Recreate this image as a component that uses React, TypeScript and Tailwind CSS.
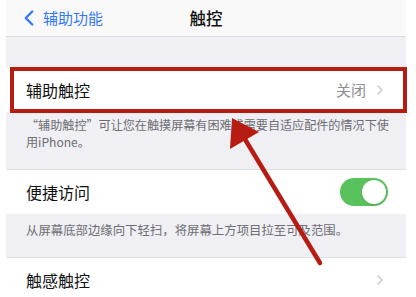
import { ChevronLeft, ChevronRight } from "lucide-react"

const font = { fontFamily: '"Noto Sans CJK SC", "Noto Sans", sans-serif' }

function Row({ label, children }: { label: string; children?: React.ReactNode }) {
  return (
    <div className="flex h-[44px] items-center justify-between bg-white pl-[20px] pr-[18px]">
      <span className="text-[16px] text-[#111]">{label}</span>
      <div className="flex items-center gap-[6px]">{children}</div>
    </div>
  )
}

export default function App() {
  return (
    <div className="relative h-[297px] w-[416px] overflow-hidden bg-white" style={font}>
      <div className="ml-[6px] flex w-[400px] flex-col bg-[#efeff4]">
        <header className="relative flex h-[37px] items-center border-b border-[#dcdcdc] bg-[#f9f9f9]">
          <div className="flex items-center pl-[10px] text-[#3478f6]">
            <ChevronLeft className="size-[26px]" strokeWidth={2.2} />
            <span className="ml-[1px] text-[15px]">辅助功能</span>
          </div>
          <h1 className="absolute left-1/2 -translate-x-1/2 text-[16.5px] font-medium text-[#111]">触控</h1>
        </header>
        <div className="h-[31px]" />
        <Row label="辅助触控">
          <span className="text-[15px] text-[#8e8e93]">关闭</span>
          <ChevronRight className="size-[16px] text-[#c4c4c8]" strokeWidth={2} />
        </Row>
        <div className="flex h-[58px] flex-col border-b border-[#e0e0e4] pl-[20px] pt-[4px] text-[12.1px] leading-[17px] text-[#6d6d72]">
          <span className="whitespace-nowrap">“辅助触控”可让您在触摸屏幕有困难或需要自适应配件的情况下使</span>
          <span>用iPhone。</span>
        </div>
        <Row label="便捷访问">
          <div className="flex h-[28px] w-[48px] items-center justify-end rounded-full bg-[#5ac25c] p-[2px]">
            <div className="size-[24px] rounded-full bg-white shadow" />
          </div>
        </Row>
        <p className="h-[44px] border-b border-[#e0e0e4] px-[20px] pt-[8px] text-[12.4px] leading-[16px] text-[#6d6d72]">
          从屏幕底部边缘向下轻扫，将屏幕上方项目拉至可及范围。
        </p>
        <Row label="触感触控">
          <ChevronRight className="size-[16px] text-[#c4c4c8]" strokeWidth={2} />
        </Row>
      </div>

      <div className="absolute left-[10px] top-[67px] h-[46px] w-[397px] border-[4px] border-[#b71c13]" />

      <svg className="absolute left-0 top-0" width="416" height="297" viewBox="0 0 416 297">
        <line x1="320" y1="263" x2="243" y2="136" stroke="#b71c13" strokeWidth="4.5" strokeLinecap="round" />
        <polygon points="232,118 230,149 259,132" fill="#b71c13" />
      </svg>
    </div>
  )
}
